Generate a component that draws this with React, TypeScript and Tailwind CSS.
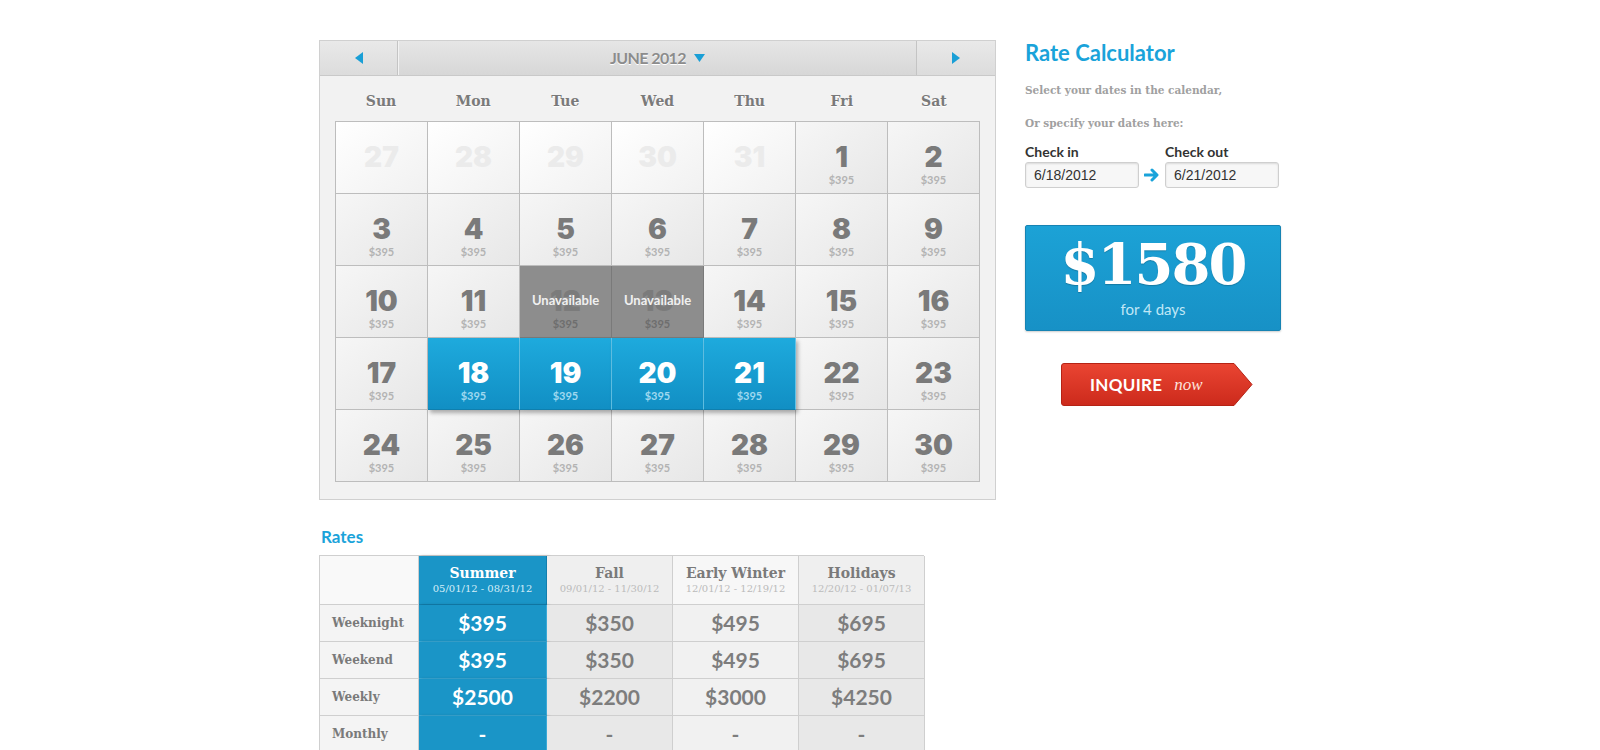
import React from "react";

const slab = "font-['DejaVu_Serif',serif]";
const sans = "font-['Lato','Open_Sans',sans-serif]";
const heavy = "font-['Inter','Lato',sans-serif]";

type Cell = { n: number; muted?: boolean; state?: "sel" | "na" };

const weeks: Cell[][] = [
    [{ n: 27, muted: true }, { n: 28, muted: true }, { n: 29, muted: true }, { n: 30, muted: true }, { n: 31, muted: true }, { n: 1 }, { n: 2 }],
    [{ n: 3 }, { n: 4 }, { n: 5 }, { n: 6 }, { n: 7 }, { n: 8 }, { n: 9 }],
    [{ n: 10 }, { n: 11 }, { n: 12, state: "na" }, { n: 13, state: "na" }, { n: 14 }, { n: 15 }, { n: 16 }],
    [{ n: 17 }, { n: 18, state: "sel" }, { n: 19, state: "sel" }, { n: 20, state: "sel" }, { n: 21, state: "sel" }, { n: 22 }, { n: 23 }],
    [{ n: 24 }, { n: 25 }, { n: 26 }, { n: 27 }, { n: 28 }, { n: 29 }, { n: 30 }],
];

const dayNames = ["Sun", "Mon", "Tue", "Wed", "Thu", "Fri", "Sat"];

function DayCell({ cell }: { cell: Cell }) {
    if (cell.state === "sel") {
        return (
            <div className="relative z-10 flex h-[72px] flex-col items-center border-r border-b border-r-[#62c3e8] border-b-[#0f7fae] bg-gradient-to-b from-[#1eaadd] to-[#118fc4] shadow-[2px_3px_4px_rgba(0,0,0,0.3)]">
                <span className={`${heavy} mt-[19px] text-[28px] leading-[32px] font-black text-white`}>{cell.n}</span>
                <span className={`${sans} text-[11px] leading-[13px] font-bold text-[#9fd8ef]`}>$395</span>
            </div>
        );
    }
    if (cell.state === "na") {
        return (
            <div className="relative flex h-[72px] flex-col items-center border-r border-b border-[#7a7a7a] bg-[#8d8d8d]">
                <span className={`${heavy} mt-[19px] text-[28px] leading-[32px] font-black text-[#7b7b7b]`}>{cell.n}</span>
                <span className={`${sans} text-[11px] leading-[13px] font-bold text-[#6e6e6e]`}>$395</span>
                <span className={`${sans} absolute inset-x-0 top-[26px] text-center text-[13px] leading-[16px] font-bold text-[#f0f0f0]`}>
                    Unavailable
                </span>
            </div>
        );
    }
    return (
        <div
            className={`flex h-[72px] flex-col items-center border-r border-b border-[#bdbdbd] bg-gradient-to-br ${
                cell.muted ? "from-[#ffffff] to-[#f1f1f1]" : "from-[#f6f6f6] to-[#e7e7e7]"
            }`}
        >
            <span className={`${heavy} mt-[19px] text-[28px] leading-[32px] font-black ${cell.muted ? "text-[#ebebeb]" : "text-[#7a7a7a]"}`}>
                {cell.n}
            </span>
            {!cell.muted && <span className={`${sans} text-[11px] leading-[13px] font-bold text-[#b3b3b3]`}>$395</span>}
        </div>
    );
}

function Calendar() {
    return (
        <div className="h-[460px] w-[677px] border border-[#d0d0d0] bg-[#f2f2f2]">
            {/* header bar */}
            <div className="flex h-[35px] border-b border-[#c9c9c9] bg-gradient-to-b from-[#e6e6e6] to-[#d7d7d7]">
                <button className="flex w-[78px] items-center justify-center border-r border-[#c4c4c4] bg-gradient-to-b from-[#e9e9e9] to-[#dcdcdc]">
                    <svg width="8" height="12" viewBox="0 0 8 12">
                        <path d="M8 0 L0 6 L8 12 Z" fill="#1a9fd6" />
                    </svg>
                </button>
                <div className="flex flex-1 items-center justify-center gap-[8px] border-l border-[#f2f2f2]">
                    <span className={`${sans} text-[16px] font-bold tracking-[-0.6px] text-[#8c8c8c] [text-shadow:0_1px_0_#fff]`}>JUNE 2012</span>
                    <svg width="11" height="8" viewBox="0 0 11 8">
                        <path d="M0 0 L11 0 L5.5 8 Z" fill="#1a9fd6" />
                    </svg>
                </div>
                <button className="flex w-[79px] items-center justify-center border-l border-[#c4c4c4] bg-gradient-to-b from-[#e9e9e9] to-[#dcdcdc]">
                    <svg width="8" height="12" viewBox="0 0 8 12">
                        <path d="M0 0 L8 6 L0 12 Z" fill="#1a9fd6" />
                    </svg>
                </button>
            </div>

            <div className="px-[15px]">
                <div className="grid h-[45px] grid-cols-7 items-center pt-[5px]">
                    {dayNames.map((d) => (
                        <span key={d} className={`${slab} text-center text-[14px] font-bold text-[#7a7a7a] [text-shadow:0_1px_0_#fff]`}>
                            {d}
                        </span>
                    ))}
                </div>
                <div className="grid grid-cols-7 border-t border-l border-[#bdbdbd]">
                    {weeks.flat().map((c, i) => (
                        <DayCell key={i} cell={c} />
                    ))}
                </div>
            </div>
        </div>
    );
}

const seasons = [
    { name: "Summer", dates: "05/01/12 - 08/31/12", vals: ["$395", "$395", "$2500", "-"] },
    { name: "Fall", dates: "09/01/12 - 11/30/12", vals: ["$350", "$350", "$2200", "-"] },
    { name: "Early Winter", dates: "12/01/12 - 12/19/12", vals: ["$495", "$495", "$3000", "-"] },
    { name: "Holidays", dates: "12/20/12 - 01/07/13", vals: ["$695", "$695", "$4250", "-"] },
];
const rowLabels = ["Weeknight", "Weekend", "Weekly", "Monthly"];

function RatesTable() {
    return (
        <div className="mt-[27px]">
            <h2 className={`${sans} pl-[2px] text-[17px] leading-[20px] font-bold text-[#1aa3da]`}>Rates</h2>
            <div className="mt-[8px] grid w-[605px] grid-cols-[99px_128px_126px_126px_126px] border-t border-l border-[#cfcfcf]">
                <div className="h-[49px] border-r border-b border-[#cfcfcf] bg-[#f9f9f9]" />
                {seasons.map((s, i) => (
                    <div
                        key={s.name}
                        className={`flex h-[49px] flex-col items-center justify-center border-r border-b ${
                            i === 0
                                ? "border-[#127fae] bg-[#1a95c7] shadow-[2px_0_3px_rgba(0,0,0,0.2)]"
                                : i === 2
                                ? "border-[#cfcfcf] bg-[#f7f7f7]"
                                : "border-[#cfcfcf] bg-[#efefef]"
                        }`}
                    >
                        <span className={`${slab} text-[14px] leading-[18px] font-bold ${i === 0 ? "text-white" : "text-[#7a7a7a]"}`}>
                            {s.name}
                        </span>
                        <span className={`${slab} text-[10px] leading-[14px] ${i === 0 ? "text-[#d5eef8]" : "text-[#bbbbbb]"}`}>
                            {s.dates}
                        </span>
                    </div>
                ))}
                {rowLabels.map((label, r) => (
                    <React.Fragment key={label}>
                        <div className="flex h-[37px] items-center border-r border-b border-[#cfcfcf] bg-[#f4f4f4] pl-[12px]">
                            <span className={`${slab} text-[12px] font-bold text-[#7a7a7a]`}>{label}</span>
                        </div>
                        {seasons.map((s, i) => (
                            <div
                                key={s.name}
                                className={`flex h-[37px] items-center justify-center border-r border-b ${
                                    i === 0
                                        ? "border-[#3aa9d6] bg-[#1a95c7] shadow-[2px_0_3px_rgba(0,0,0,0.2)]"
                                        : i === 2
                                        ? "border-[#cfcfcf] bg-[#f1f1f1]"
                                        : "border-[#cfcfcf] bg-[#e8e8e8]"
                                }`}
                            >
                                <span className={`${sans} text-[21px] font-bold ${i === 0 ? "text-white" : "text-[#7d7d7d]"}`}>{s.vals[r]}</span>
                            </div>
                        ))}
                    </React.Fragment>
                ))}
            </div>
        </div>
    );
}

function RateCalculator() {
    return (
        <div className="w-[256px]">
            <h1 className={`${sans} text-[22px] leading-[26px] font-bold text-[#1aa3da]`}>Rate Calculator</h1>
            <p className={`${slab} mt-[16px] text-[10.5px] leading-[16px] font-bold text-[#a0a0a0]`}>
                Select your dates in the calendar,
            </p>
            <p className={`${slab} mt-[17px] text-[10.5px] leading-[16px] font-bold text-[#a0a0a0]`}>
                Or specify your dates here:
            </p>
            <div className="mt-[13px] flex items-end">
                <div className="w-[114px]">
                    <div className={`${sans} text-[14px] leading-[16px] font-bold text-[#333]`}>Check in</div>
                    <input
                        readOnly
                        value="6/18/2012"
                        className="mt-[2px] h-[26px] w-[114px] rounded-[3px] border border-[#cfcfcf] bg-[#f7f7f7] pl-[8px] font-['Liberation_Sans',sans-serif] text-[14px] text-[#333] shadow-[inset_0_1px_2px_rgba(0,0,0,0.12)]"
                    />
                </div>
                <div className="flex h-[26px] w-[26px] items-center justify-center">
                    <svg width="16" height="14" viewBox="0 0 16 14">
                        <path d="M1 7 H12 M8 2 L13 7 L8 12" stroke="#1aa3da" strokeWidth="3" fill="none" strokeLinecap="round" strokeLinejoin="round" />
                    </svg>
                </div>
                <div className="w-[114px]">
                    <div className={`${sans} text-[14px] leading-[16px] font-bold text-[#333]`}>Check out</div>
                    <input
                        readOnly
                        value="6/21/2012"
                        className="mt-[2px] h-[26px] w-[114px] rounded-[3px] border border-[#cfcfcf] bg-[#f7f7f7] pl-[8px] font-['Liberation_Sans',sans-serif] text-[14px] text-[#333] shadow-[inset_0_1px_2px_rgba(0,0,0,0.12)]"
                    />
                </div>
            </div>

            <div className="mt-[37px] flex h-[106px] w-[256px] flex-col items-center rounded-[2px] border border-[#1683b3] bg-gradient-to-b from-[#1ca2d6] to-[#1791c6] shadow-[0_1px_2px_rgba(0,0,0,0.2)]">
                <span className={`${slab} mt-[4px] text-[56px] leading-[68px] font-bold tracking-[-2px] text-white [text-shadow:0_1px_1px_rgba(0,0,0,0.2)]`}>
                    $1580
                </span>
                <span className={`${sans} mt-[2px] text-[15px] leading-[18px] text-[#c0e7f6]`}>for 4 days</span>
            </div>

            <div className="relative ml-[36px] mt-[32px] h-[43px] w-[192px]">
                <svg className="absolute inset-0" width="192" height="43" viewBox="0 0 192 43">
                    <defs>
                        <linearGradient id="red" x1="0" y1="0" x2="0" y2="1">
                            <stop offset="0" stopColor="#ea4532" />
                            <stop offset="1" stopColor="#cc2a1c" />
                        </linearGradient>
                    </defs>
                    <path d="M3 0.5 H173 L191 21.5 L173 42.5 H3 Q0.5 42.5 0.5 40 V3 Q0.5 0.5 3 0.5 Z" fill="url(#red)" stroke="#b52315" />
                </svg>
                <div className="relative flex h-full items-center pl-[29px]">
                    <span className={`${sans} text-[17px] font-bold tracking-[0.3px] text-white`}>INQUIRE</span>
                    <span className="ml-[12px] font-['Liberation_Serif',serif] text-[17px] italic text-[#fde3de]">now</span>
                </div>
            </div>
        </div>
    );
}

export default function App() {
    return (
        <div className="min-h-screen bg-white">
            <div className="mx-auto flex w-[962px] gap-[29px] pt-[40px]">
                <div className="w-[677px]">
                    <Calendar />
                    <RatesTable />
                </div>
                <RateCalculator />
            </div>
        </div>
    );
}
